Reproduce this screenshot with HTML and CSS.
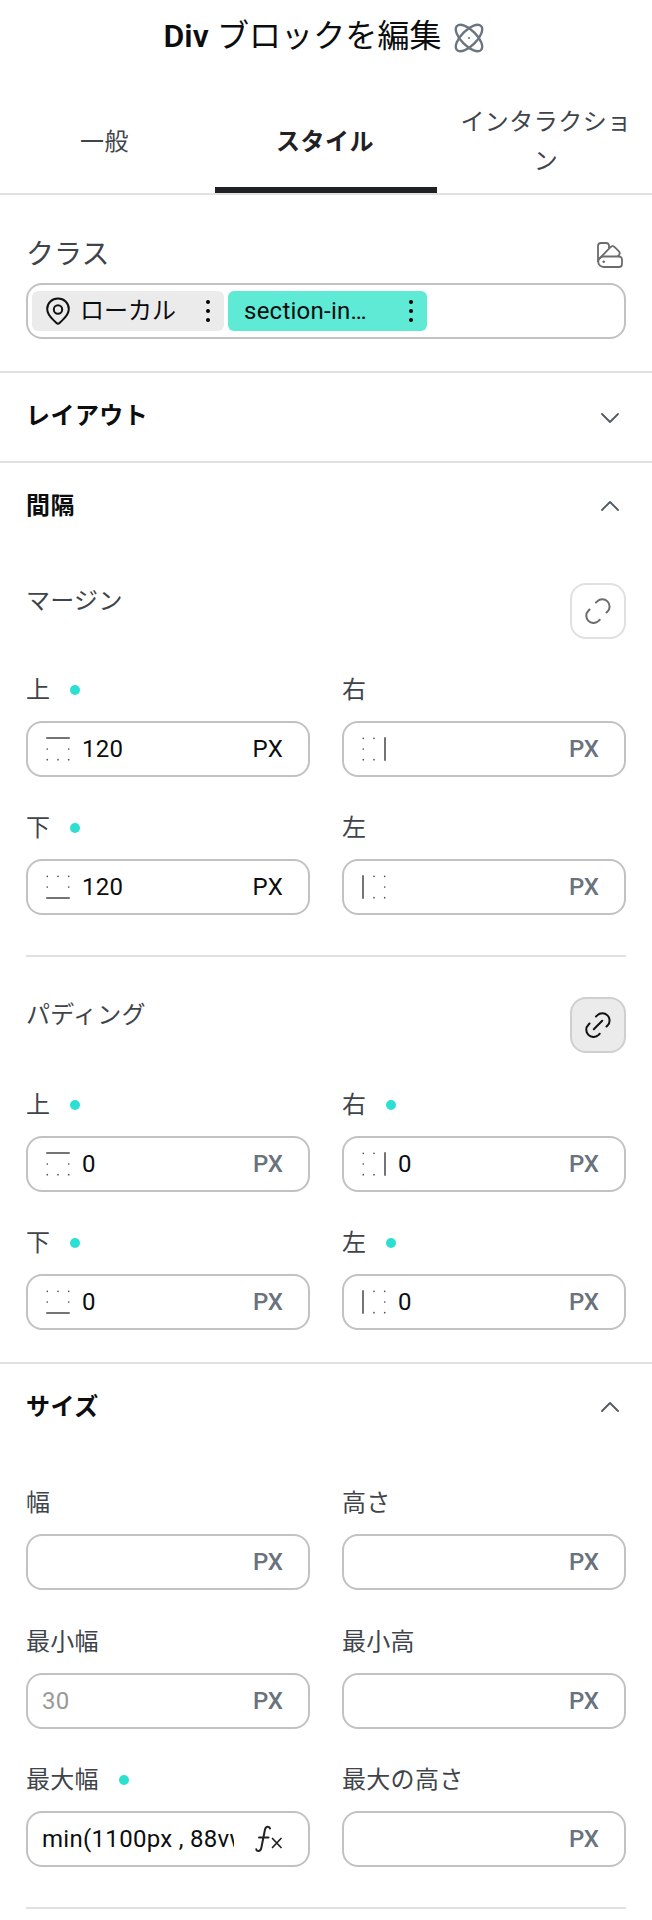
FILE: index.html
```html
<!DOCTYPE html>
<html lang="ja">
<head>
<meta charset="utf-8">
<title>Div ブロックを編集</title>
<link rel="stylesheet" href="styles.css">
</head>
<body>
<svg class="defs" aria-hidden="true">
  <symbol id="up" viewBox="0 0 18 10"><path d="M1 9l8-8 8 8" fill="none" stroke="#515962" stroke-width="1.8" stroke-linecap="round" stroke-linejoin="round"/></symbol>
  <symbol id="side" viewBox="0 0 24 24"><path d="M1 1h22" stroke="#747474" stroke-width="2" stroke-linecap="round"/><g fill="#555"><circle cx="1.3" cy="12" r=".85"/><circle cx="22.7" cy="12" r=".85"/><circle cx="1.3" cy="22.7" r=".85"/><circle cx="12" cy="22.7" r=".85"/><circle cx="22.7" cy="22.7" r=".85"/></g></symbol>
  <symbol id="dots" viewBox="0 0 4 22"><circle cx="2" cy="2" r="2"/><circle cx="2" cy="11" r="2"/><circle cx="2" cy="20" r="2"/></symbol>
</svg>
<main class="panel">
  <header class="title">
    <h1><b>Div</b> ブロックを編集</h1>
    <svg class="atom" width="28" height="28" viewBox="0 0 28 28" fill="none" stroke="#6b7580" stroke-width="2.4"><ellipse cx="14" cy="14" rx="17" ry="7.7" transform="rotate(45 14 14)"/><ellipse cx="14" cy="14" rx="17" ry="7.7" transform="rotate(-45 14 14)"/><circle cx="14" cy="14" r="1.1" fill="#6b7580" stroke="none"/></svg>
  </header>
  <nav class="tabs">
    <a class="tab first">一般</a>
    <a class="tab active">スタイル</a>
    <a class="tab">インタラクション</a>
  </nav>

  <section class="classes">
    <div class="classes-head">
      <span>クラス</span>
      <svg width="26" height="26" viewBox="0 0 26 26" fill="none" stroke="#6c6c6c" stroke-width="1.8" stroke-linejoin="round"><path d="M1 20V4a3 3 0 0 1 3-3h5a3 3 0 0 1 3 3v2"/><path d="M2 17L13.5 5.2a3 3 0 0 1 4.2 0l4 4a3 3 0 0 1 0 4.2l-1.2 1.1"/><path d="M6.5 14.5H22a3 3 0 0 1 3 3V22a3 3 0 0 1-3 3H6.5a5.25 5.25 0 0 1 0-10.500z"/><circle cx="6.700" cy="19.700" r="1.300" fill="#6c6c6c" stroke="none"/></svg>
    </div>
    <div class="chips">
      <div class="chip local">
        <svg width="24" height="28" viewBox="0 0 24 28" fill="none" stroke="#111" stroke-width="2" stroke-linejoin="round"><path d="M12 1.500C6 1.500 1.200 6 1.200 12c0 5.500 3.600 8.500 6.800 11.600l2.500 2.400a2.200 2.200 0 0 0 3 0l2.500-2.400c3.200-3.100 6.800-6.100 6.800-11.600C22.800 6 18 1.500 12 1.500z"/><circle cx="12" cy="12.500" r="4.200"/></svg>
        <span>ローカル</span>
        <svg class="more" width="4" height="22"><use href="#dots"/></svg>
      </div>
      <div class="chip named">
        <span>section-in…</span>
        <svg class="more" width="4" height="22"><use href="#dots"/></svg>
      </div>
    </div>
  </section>

  <section class="section">
    <h2>レイアウト<svg class="flip" width="18" height="10"><use href="#up"/></svg></h2>
  </section>

  <section class="section">
    <h2>間隔<svg width="18" height="10"><use href="#up"/></svg></h2>
    <div class="group">
      <div class="group-head">
        <span>マージン</span>
        <button class="link"><svg width="26" height="26" viewBox="0 0 26 26" fill="none" stroke="#6c6c6c" stroke-width="2" stroke-linecap="round"><path d="M11 4.500l1.200-1.100a7.200 7.200 0 0 1 10.300 10.200L21.500 14.500M4.500 11.500l-1.100 1.200a7.200 7.200 0 0 0 10.200 10.200L14.700 21.700"/></svg></button>
      </div>
      <div class="grid">
        <div class="field"><label>上<i></i></label><div class="input"><svg class="side" width="24" height="24"><use href="#side"/></svg><span class="value">120</span><span class="unit set">PX</span></div></div>
        <div class="field"><label>右</label><div class="input"><svg class="side right" width="24" height="24"><use href="#side"/></svg><span class="value"></span><span class="unit">PX</span></div></div>
        <div class="field"><label>下<i></i></label><div class="input"><svg class="side bottom" width="24" height="24"><use href="#side"/></svg><span class="value">120</span><span class="unit set">PX</span></div></div>
        <div class="field"><label>左</label><div class="input"><svg class="side left" width="24" height="24"><use href="#side"/></svg><span class="value"></span><span class="unit">PX</span></div></div>
      </div>
    </div>
    <hr>
    <div class="group padding">
      <div class="group-head">
        <span>パディング</span>
        <button class="link on"><svg width="26" height="26" viewBox="0 0 26 26" fill="none" stroke="#111" stroke-width="2" stroke-linecap="round"><path d="M11 4.500l1.200-1.100a7.200 7.200 0 0 1 10.300 10.200L21.500 14.500M4.500 11.500l-1.100 1.200a7.200 7.200 0 0 0 10.200 10.200L14.700 21.700M8.800 17.200l8.400-8.400"/></svg></button>
      </div>
      <div class="grid">
        <div class="field"><label>上<i></i></label><div class="input"><svg class="side" width="24" height="24"><use href="#side"/></svg><span class="value">0</span><span class="unit">PX</span></div></div>
        <div class="field"><label>右<i></i></label><div class="input"><svg class="side right" width="24" height="24"><use href="#side"/></svg><span class="value">0</span><span class="unit">PX</span></div></div>
        <div class="field"><label>下<i></i></label><div class="input"><svg class="side bottom" width="24" height="24"><use href="#side"/></svg><span class="value">0</span><span class="unit">PX</span></div></div>
        <div class="field"><label>左<i></i></label><div class="input"><svg class="side left" width="24" height="24"><use href="#side"/></svg><span class="value">0</span><span class="unit">PX</span></div></div>
      </div>
    </div>
  </section>

  <section class="section">
    <h2>サイズ<svg width="18" height="10"><use href="#up"/></svg></h2>
    <div class="grid sizes">
      <div class="field"><label>幅</label><div class="input plain"><span class="value"></span><span class="unit">PX</span></div></div>
      <div class="field"><label>高さ</label><div class="input plain"><span class="value"></span><span class="unit">PX</span></div></div>
      <div class="field"><label>最小幅</label><div class="input plain"><span class="value hint">30</span><span class="unit">PX</span></div></div>
      <div class="field"><label>最小高</label><div class="input plain"><span class="value"></span><span class="unit">PX</span></div></div>
      <div class="field"><label>最大幅<i></i></label><div class="input plain"><span class="value">min(1100px , 88vw)</span><svg class="fx" width="28" height="28" viewBox="0 0 28 28" fill="none" stroke="#222" stroke-width="2" stroke-linecap="round" stroke-linejoin="round"><path d="M15 3.500C14.600 1.200 10.900.8 10 4.500L6.400 22.500C5.600 26.800 1.700 27 1.300 24.300M4 12.500h9.500"/><path d="M17.500 13.500l8.500 9M26 13.500l-8.500 9" stroke-width="1.700"/></svg></div></div>
      <div class="field"><label>最大の高さ</label><div class="input plain"><span class="value"></span><span class="unit">PX</span></div></div>
    </div>
    <hr>
  </section>
</main>
</body>
</html>
```
FILE: styles.css
```css
* { box-sizing: border-box; }
body {
  margin: 0;
  background: #fff;
  color: #0c0d0e;
  font: 24px/36px Roboto, "Noto Sans CJK JP", sans-serif;
}
svg { display: block; flex: none; }
.defs { position: absolute; width: 0; height: 0; }
.panel { width: 652px; height: 1920px; overflow: hidden; }

.title {
  display: flex;
  justify-content: center;
  align-items: center;
  gap: 13px;
  height: 75px;
  padding-right: 6px;
}
.title h1 { margin: 0; font-size: 32px; line-height: 48px; font-weight: 400; letter-spacing: .1px; padding-bottom: 3px; }
.title b { font-weight: 600; }
.atom { overflow: visible; }

.tabs {
  display: grid;
  grid-template-columns: 215px 222px 215px;
  height: 120px;
  border-bottom: 2px solid #e0e1e3;
}
.tab {
  display: flex;
  align-items: center;
  justify-content: center;
  padding: 22px 20px 0 23px;
  border-bottom: 6px solid transparent;
  line-height: 39px;
  letter-spacing: .45px;
  color: #3f444b;
  text-align: center;
  word-break: break-all;
}
.tab.first { padding-right: 29px; }
.tab.active { padding-right: 25px; border-color: #1f2124; color: #1f2124; font-weight: 700; }

.classes { height: 176px; padding: 38px 26px 0; }
.classes-head {
  display: flex;
  justify-content: space-between;
  align-items: center;
  height: 40px;
  margin-bottom: 10px;
  padding-right: 3px;
  color: #3f444b;
  font-size: 28px;
}
.classes-head span { padding-top: 4px; }
.classes-head svg { margin-top: 4px; }
.chips {
  display: flex;
  gap: 4px;
  height: 56px;
  padding: 6px 4px;
  border: 2px solid #c2c2c2;
  border-radius: 16px;
}
.chip {
  display: flex;
  align-items: center;
  height: 40px;
  border-radius: 6px;
}
.more { margin-left: auto; }
.local { width: 192px; padding: 0 14px; gap: 10px; background: #ebebeb; }
.named { width: 199px; padding: 0 14px 0 16px; background: #5eead4; letter-spacing: .25px; }

.section { border-top: 2px solid #e0e1e3; }
.section h2 {
  display: flex;
  align-items: center;
  justify-content: space-between;
  height: 88px;
  margin: 0;
  padding: 0 33px 2px 26px;
  font-size: 24px;
  font-weight: 700;
  letter-spacing: .45px;
}
.section h2 .flip { transform: rotate(180deg); margin-top: 3px; }

.group { padding: 32px 26px 40px; }
.group.padding { padding: 40px 26px 32px; }
.group-head {
  display: flex;
  justify-content: space-between;
  height: 56px;
  margin-bottom: 24px;
  letter-spacing: .3px;
  color: #3f444b;
}
.padding .group-head { margin-bottom: 25px; }
.link {
  display: grid;
  place-items: center;
  width: 56px;
  height: 56px;
  padding: 0;
  border: 2px solid #e0e0e0;
  border-radius: 16px;
  background: #fff;
}
.link.on { background: #ebebeb; border-color: #cfcfcf; }

.grid { display: grid; grid-template-columns: 284px 284px; gap: 24px 32px; }
.field label {
  display: flex;
  align-items: center;
  height: 50px;
  margin-bottom: 8px;
  padding-top: 4px;
  letter-spacing: .3px;
  color: #3f444b;
}
.field i {
  width: 10px;
  height: 10px;
  margin-left: 20px;
  border-radius: 50%;
  background: #2be0d0;
}
.input {
  display: flex;
  align-items: center;
  height: 56px;
  padding: 0 25px 0 18px;
  border: 2px solid #c2c2c2;
  border-radius: 16px;
}
.input.plain { padding-left: 14px; }
.value { flex: 1; height: 36px; overflow: hidden; white-space: nowrap; letter-spacing: .3px; }
.side + .value { margin-left: 12px; }
.plain .value { margin-right: 21px; }
.hint { color: #999; }
.unit { color: #69727d; font-weight: 500; }
.unit.set { color: #0c0d0e; font-weight: 400; letter-spacing: .3px; }
.right { transform: rotate(90deg); }
.bottom { transform: rotate(180deg); }
.left { transform: rotate(-90deg); }

.sizes { padding: 24px 26px 40px; row-gap: 24.5px; }
hr { height: 2px; margin: 0 26px; border: 0; background: #e0e1e3; }
```
